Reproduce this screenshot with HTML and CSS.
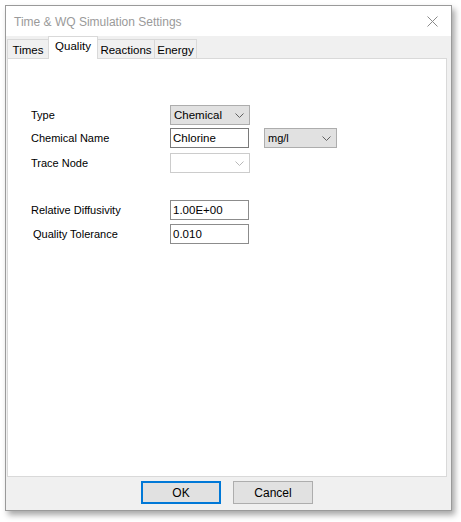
FILE: index.html
```html
<!DOCTYPE html>
<html>
<head>
<meta charset="utf-8">
<link rel="stylesheet" href="styles.css">
</head>
<body>
<div class="window">
  <div class="titlebar">
    <span class="title">Time &amp; WQ Simulation Settings</span>
    <svg class="close" width="11" height="11" viewBox="0 0 11 11"><path d="M0.5 0.5L10.5 10.5M10.5 0.5L0.5 10.5" stroke="#8a8a8a" stroke-width="1" fill="none"/></svg>
  </div>
  <div class="client">
    <div class="tabs">
      <div class="tab t-times">Times</div>
      <div class="tab active t-quality">Quality</div>
      <div class="tab t-reactions">Reactions</div>
      <div class="tab t-energy">Energy</div>
    </div>
    <div class="panel">
      <div class="row r-type">
        <span class="label">Type</span>
        <div class="select sel-main"><span>Chemical</span><svg class="chev" width="9" height="5" viewBox="0 0 9 5"><path d="M0.5 0.5L4.5 4.5L8.5 0.5" stroke="#606060" fill="none"/></svg></div>
      </div>
      <div class="row r-name">
        <span class="label">Chemical Name</span>
        <div class="input">Chlorine</div>
        <div class="select sel-unit"><span>mg/l</span><svg class="chev" width="9" height="5" viewBox="0 0 9 5"><path d="M0.5 0.5L4.5 4.5L8.5 0.5" stroke="#606060" fill="none"/></svg></div>
      </div>
      <div class="row r-trace">
        <span class="label">Trace Node</span>
        <div class="select disabled"><span></span><svg class="chev" width="9" height="5" viewBox="0 0 9 5"><path d="M0.5 0.5L4.5 4.5L8.5 0.5" stroke="#b8b8b8" fill="none"/></svg></div>
      </div>
      <div class="row r-diff">
        <span class="label">Relative Diffusivity</span>
        <div class="input light">1.00E+00</div>
      </div>
      <div class="row r-tol">
        <span class="label indent">Quality Tolerance</span>
        <div class="input light">0.010</div>
      </div>
    </div>
    <div class="footer">
      <div class="btn default">OK</div>
      <div class="btn">Cancel</div>
    </div>
  </div>
</div>
</body>
</html>
```
FILE: styles.css
```css
html, body {
  margin: 0;
  padding: 0;
  background: #ffffff;
  width: 461px;
  height: 522px;
  overflow: hidden;
  font-family: "Liberation Sans", Arial, sans-serif;
}
.window {
  margin: 5px 0 0 5px;
  width: 445px;
  height: 504px;
  border: 1px solid #9a9a9a;
  background: #f0f0f0;
  box-shadow: 3px 4px 6px rgba(0,0,0,0.35);
  display: flex;
  flex-direction: column;
}
.titlebar {
  height: 30px;
  background: #ffffff;
  display: flex;
  align-items: center;
  justify-content: space-between;
  padding: 0 13px 0 8px;
}
.title {
  font-size: 12px;
  color: #9a9a9a;
  margin-top: 1px;
}
.close {
  display: block;
  margin-top: 1px;
}
.client {
  flex: 1;
  display: flex;
  flex-direction: column;
  padding: 0 4px 0 1px;
}
.tabs {
  display: flex;
  height: 22px;
  align-items: flex-end;
  position: relative;
  z-index: 1;
}
.tab {
  box-sizing: border-box;
  height: 19px;
  border: 1px solid #d9d9d9;
  border-bottom: none;
  background: #f0f0f0;
  font-size: 11.5px;
  color: #000;
  display: flex;
  align-items: center;
  justify-content: center;
  padding-top: 2px;
  margin-left: -1px;
  white-space: nowrap;
}
.tab:first-child { margin-left: 0; }
.t-times { width: 42px; }
.t-quality { width: 50px; }
.t-reactions { width: 58px; }
.t-energy { width: 43px; }
.tab.active {
  height: 23px;
  margin-bottom: -1px;
  background: #ffffff;
  padding-top: 0;
  padding-bottom: 4px;
}
.panel {
  box-sizing: border-box;
  height: 419px;
  background: #ffffff;
  border: 1px solid #d9d9d9;
  padding: 46px 0 0 23px;
  font-size: 11px;
}
.row {
  display: flex;
  align-items: center;
  height: 20px;
}
.r-name { margin-top: 3px; }
.r-trace { margin-top: 5px; }
.r-diff { margin-top: 27px; }
.r-tol { margin-top: 4px; }
.label {
  width: 139px;
  color: #000;
  font-size: 11px;
}
.label.indent { padding-left: 2px; width: 137px; }
.select, .input {
  box-sizing: border-box;
  height: 20px;
  width: 80px;
  display: flex;
  align-items: center;
  font-size: 11.5px;
}
.select {
  background: #e1e1e1;
  border: 1px solid #adadad;
  justify-content: space-between;
  padding: 0 5px 0 3px;
}
.select .chev { display: block; }
.sel-unit {
  width: 73px;
  margin-left: 15px;
  font-size: 11px;
}
.select.disabled {
  background: #ffffff;
  border-color: #cccccc;
}
.input {
  width: 79px;
  border: 1px solid #7a7a7a;
  background: #ffffff;
  padding-left: 2px;
}
.input.light { border-color: #8c8c8c; }
.footer {
  flex: 1;
  display: flex;
  justify-content: flex-start;
  align-items: flex-start;
  gap: 12px;
  padding-top: 4px;
  padding-left: 134px;
}
.btn {
  box-sizing: border-box;
  width: 80px;
  height: 23px;
  background: #e1e1e1;
  border: 1px solid #adadad;
  font-size: 12px;
  display: flex;
  align-items: center;
  justify-content: center;
}
.btn.default {
  border: 2px solid #0078d7;
}
```
